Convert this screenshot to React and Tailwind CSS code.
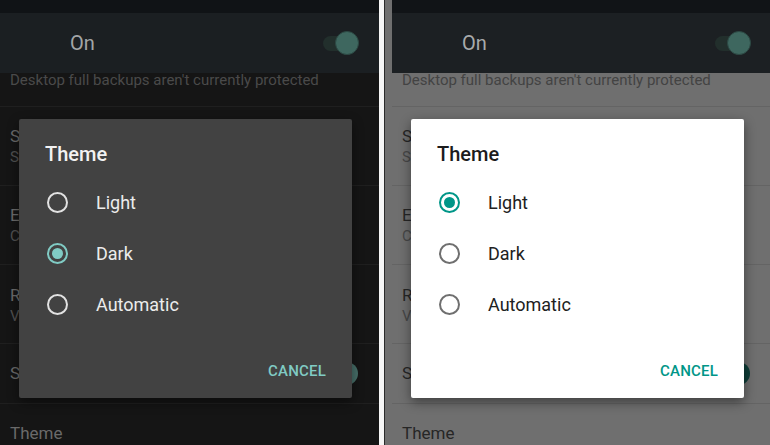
import React from 'react'

const themes = {
  dark: {
    strip: 'bg-[#101316]',
    header: 'bg-[#1b1f22]',
    on: 'text-[#a3a6a7]',
    list: 'bg-[#151515]',
    sep: 'bg-[#1f1f1f]',
    desc: 'text-[#4a4a4a]',
    title: 'text-[#6a6a6a]',
    sub: 'text-[#505050]',
    rowThumb: 'bg-[#476f69]',
    dialog: 'bg-[#424242]',
    dTitle: 'text-[#f2f2f2]',
    dLabel: 'text-[#ececec]',
    ring: 'border-[#e2e2e2]',
    checkedRing: 'border-[#80cbc4]',
    dot: 'bg-[#80cbc4]',
    cancel: 'text-[#80cbc4]',
  },
  light: {
    strip: 'bg-[#111417]',
    header: 'bg-[#1c2023]',
    on: 'text-[#a8abac]',
    list: 'bg-[#6f6f6f]',
    sep: 'bg-[#646464]',
    desc: 'text-[#434343]',
    title: 'text-[#262626]',
    sub: 'text-[#474747]',
    rowThumb: 'bg-[#0e3d38]',
    dialog: 'bg-white',
    dTitle: 'text-[#1c1c1c]',
    dLabel: 'text-[#212121]',
    ring: 'border-[#6f6f6f]',
    checkedRing: 'border-[#009688]',
    dot: 'bg-[#009688]',
    cancel: 'text-[#009688]',
  },
}

function Radio({ checked, t }) {
  return (
    <span
      className={`w-[21px] h-[21px] rounded-full border-2 flex items-center justify-center shrink-0 ${checked ? t.checkedRing : t.ring}`}
    >
      {checked && <span className={`w-[11px] h-[11px] rounded-full ${t.dot}`} />}
    </span>
  )
}

// rows sit under the dialog, only their first letters peek out
function Row({ title, sub, t, className = '' }) {
  return (
    <div className={`px-[10px] flex flex-col ${className}`}>
      <span className={`text-[17px] leading-[22px] ${t.title}`}>{title}</span>
      {sub && <span className={`text-[15px] leading-[20px] ${t.sub}`}>{sub}</span>}
    </div>
  )
}

function Screen({ mode, selected }) {
  const t = themes[mode]
  const options = ['Light', 'Dark', 'Automatic']
  return (
    <div className="relative w-[379px] h-[445px]">
      <div className={`h-[13px] ${t.strip}`} />
      <div className={`h-[60px] flex items-center ${t.header}`}>
        <span className={`ml-[70px] text-[20px] ${t.on}`}>On</span>
        <div className="ml-auto mr-[20px] relative w-[36px] h-[24px] flex items-center">
          <div className="w-[30px] h-[15px] rounded-full bg-[#222f2c]" />
          <div className="absolute right-0 top-0 w-[24px] h-[24px] rounded-full bg-[#3e675f] border border-[#2c4843]" />
        </div>
      </div>
      <div className={t.list}>
        <div className="h-[33px] px-[10px]">
          <span className={`block text-[15px] leading-[14px] ${t.desc}`}>
            Desktop full backups aren't currently protected
          </span>
        </div>
        <div className={`h-px ${t.sep}`} />
        <Row t={t} title="S" sub="S" className="h-[78px] pt-[18px]" />
        <div className={`h-px ${t.sep}`} />
        <Row t={t} title="E" sub="C" className="h-[78px] pt-[18px]" />
        <div className={`h-px ${t.sep}`} />
        <Row t={t} title="R" sub="V" className="h-[78px] pt-[19px]" />
        <div className={`h-px ${t.sep}`} />
        <div className="h-[59px] px-[10px] flex items-center">
          <span className={`text-[17px] ${t.title}`}>S</span>
          <div className={`ml-auto mr-[11px] w-[23px] h-[23px] rounded-full ${t.rowThumb}`} />
        </div>
        <div className={`h-px ${t.sep}`} />
        <Row t={t} title="Theme" className="h-[42px] pt-[18px]" />
      </div>

      <div
        className={`absolute left-[19px] top-[119px] w-[333px] h-[279px] rounded-[2px] shadow-[0_4px_12px_rgba(0,0,0,0.45)] flex flex-col ${t.dialog}`}
      >
        <div className={`pl-[26px] pt-[23px] text-[20px] leading-[24px] font-medium ${t.dTitle}`}>Theme</div>
        <div className="mt-[11px] flex flex-col">
          {options.map((o) => (
            <div key={o} className="h-[51px] pl-[28px] flex items-center">
              <Radio checked={o === selected} t={t} />
              <span className={`ml-[28px] text-[18px] ${t.dLabel}`}>{o}</span>
            </div>
          ))}
        </div>
        <div className="mt-auto pb-[17px] pr-[26px] flex justify-end">
          <span className={`text-[15px] leading-[20px] font-medium tracking-[0.2px] ${t.cancel}`}>CANCEL</span>
        </div>
      </div>
    </div>
  )
}

export default function App() {
  return (
    <div className="w-[770px] h-[445px] flex overflow-hidden bg-white" style={{ fontFamily: 'Roboto, "Noto Sans", sans-serif' }}>
      <div className="w-[379px] h-full overflow-hidden">
        <Screen mode="dark" selected="Dark" />
      </div>
      <div className="w-[5px] h-full bg-[#f5f5f5]" />
      <div className="w-[386px] h-full overflow-hidden border-l border-[#2a2a2a] bg-[#6f6f6f]">
        <div className="ml-[7px]">
          <Screen mode="light" selected="Light" />
        </div>
      </div>
    </div>
  )
}
